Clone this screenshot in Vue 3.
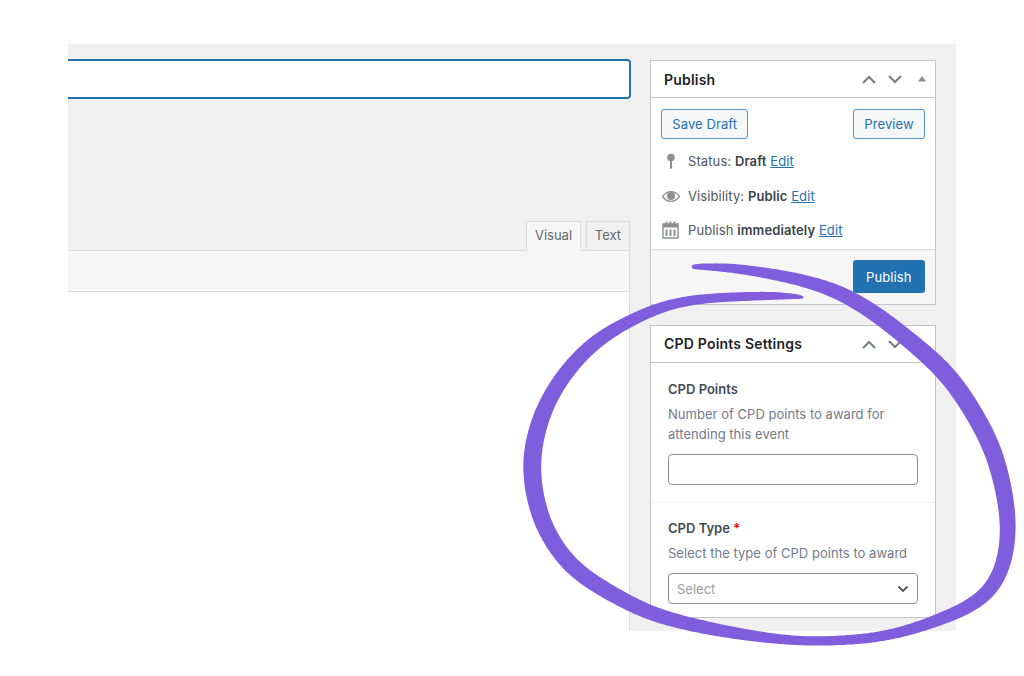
<script setup>
const pts = [
  [692,267,3],[700,266.5,7],[733,268,9],[783,276,11.5],[820,285,13],[849,297,15],[883,319,16],
  [915,345,17],[948,375,18],[978,420,18],[996.5,460,17.5],[1008.5,520,16],[1005,560,15],[997,582,15],
  [983,599,14],[956,613,13],[916,628,11],[880,637,10],[840,640.5,9.5],[800,641,9],[753,636,11],
  [707,628,13],[673,620,14],[640,609,15],[581,575,16.5],[560,553,16.5],[541,520,17],[531,470,18],
  [536,433,17.5],[548,400,16],[570,367,15],[597,340,14],[628,322,12],[655,309,11],[690,300,9.5],
  [733,297,9],[780,295.5,8],[800,296.5,5],[803.5,298,1]
];
// Dense Catmull-Rom samples along the hand-read centre line
function dense() {
  const out = [];
  for (let i = 0; i < pts.length - 1; i++) {
    const p0 = pts[Math.max(i - 1, 0)], p1 = pts[i], p2 = pts[i + 1], p3 = pts[Math.min(i + 2, pts.length - 1)];
    for (let n = 0; n < 16; n++) {
      const t = n / 16, t2 = t * t, t3 = t2 * t;
      out.push([0, 1, 2].map(k => 0.5 * (2 * p1[k] + (p2[k] - p0[k]) * t + (2 * p0[k] - 5 * p1[k] + 4 * p2[k] - p3[k]) * t2 + (3 * p1[k] - p0[k] - 3 * p2[k] + p3[k]) * t3)));
    }
  }
  out.push(pts[pts.length - 1]);
  return out;
}
// Even spacing along the arc, so the smoothing window is the same length everywhere
function resample(list, step) {
  const out = [list[0]];
  let carry = 0;
  for (let i = 1; i < list.length; i++) {
    const a = list[i - 1], b = list[i];
    const d = Math.hypot(b[0] - a[0], b[1] - a[1]);
    let pos = step - carry;
    while (pos <= d) {
      const t = d ? pos / d : 0;
      out.push([a[0] + (b[0] - a[0]) * t, a[1] + (b[1] - a[1]) * t, a[2] + (b[2] - a[2]) * t]);
      pos += step;
    }
    carry = (carry + d) % step;
  }
  out.push(list[list.length - 1]);
  return out;
}
function smooth(list, radius) {
  return list.map((_, i) => {
    const r = Math.min(radius, i, list.length - 1 - i);
    const sum = [0, 0, 0];
    for (let j = i - r; j <= i + r; j++) for (let k = 0; k < 3; k++) sum[k] += list[j][k];
    return sum.map(v => v / (2 * r + 1));
  });
}
const line = smooth(smooth(resample(dense(), 2), 10), 10);
const left = [], right = [];
line.forEach((p, i) => {
  const a = line[Math.max(i - 1, 0)], b = line[Math.min(i + 1, line.length - 1)];
  const dx = b[0] - a[0], dy = b[1] - a[1], l = Math.hypot(dx, dy) || 1;
  const nx = -dy / l * p[2] / 2, ny = dx / l * p[2] / 2;
  left.push(`${(p[0] + nx).toFixed(1)} ${(p[1] + ny).toFixed(1)}`);
  right.unshift(`${(p[0] - nx).toFixed(1)} ${(p[1] - ny).toFixed(1)}`);
});
const scribble = 'M' + left.concat(right).join('L') + 'Z';
</script>

<template>
  <div class="page">
    <div class="screen">
      <div class="main">
        <div class="title-input"></div>
        <div class="tabs">
          <span class="tab active">Visual</span>
          <span class="tab">Text</span>
        </div>
        <div class="editor">
          <div class="toolbar"></div>
          <div class="area"></div>
        </div>
      </div>

      <div class="side">
        <section class="box">
          <header class="box-head">
            <h2>Publish</h2>
            <div class="head-icons">
              <svg width="16" height="10" viewBox="0 0 16 10"><path d="M2 9 8 3l6 6" /></svg>
              <svg width="16" height="10" viewBox="0 0 16 10"><path d="M2 2l6 6 6-6" /></svg>
              <svg class="tri" width="10" height="10" viewBox="0 0 10 10"><polygon points="5,2 9,7.5 1,7.5" /></svg>
            </div>
          </header>
          <div class="publish-body">
            <div class="actions">
              <span class="btn">Save Draft</span>
              <span class="btn">Preview</span>
            </div>
            <div class="meta">
              <div class="row row-status">
                <span class="ico">
                  <svg width="18" height="18" viewBox="0 0 18 18"><circle cx="9" cy="5.5" r="3.8" fill="#8c8f94" /><rect x="8" y="7" width="2" height="10" rx="1" fill="#8c8f94" /></svg>
                </span>
                <span>Status: <b>Draft</b> <a>Edit</a></span>
              </div>
              <div class="row row-vis">
                <span class="ico">
                  <svg width="18" height="18" viewBox="0 0 18 18"><path d="M0.5 9.5C3 6 6 4.6 9 4.6s6 1.4 8.5 4.9C15 13 12 14.400 9 14.400S3 13 .5 9.500Z" fill="none" stroke="#8c8f94" stroke-width="1.3" /><circle cx="9" cy="9" r="4" fill="#8c8f94" /></svg>
                </span>
                <span>Visibility: <b>Public</b> <a>Edit</a></span>
              </div>
              <div class="row row-date">
                <span class="ico">
                  <svg width="18" height="18" viewBox="0 0 18 18"><path d="M1 3h15v14H1z" fill="none" stroke="#8c8f94" stroke-width="1.4" /><rect x="1" y="3" width="15" height="3.5" fill="#8c8f94" /><path d="M3.5 .5h2v4h-2zM7.5 .5h2v4h-2zM11.5 .5h2v4h-2zM3.5 8.5h2v6.500h-2zM7.500 8.5h2v6.500h-2zM11.500 8.5h2v6.500h-2z" fill="#8c8f94" /></svg>
                </span>
                <span>Publish <b>immediately</b> <a>Edit</a></span>
              </div>
            </div>
            <div class="publish-foot">
              <span class="btn primary">Publish</span>
            </div>
          </div>
        </section>

        <section class="box cpd">
          <header class="box-head">
            <h2>CPD Points Settings</h2>
            <div class="head-icons">
              <svg width="16" height="10" viewBox="0 0 16 10"><path d="M2 9 8 3l6 6" /></svg>
              <svg width="16" height="10" viewBox="0 0 16 10"><path d="M2 2l6 6 6-6" /></svg>
              <svg class="tri" width="10" height="10" viewBox="0 0 10 10"><polygon points="5,2 9,7.5 1,7.5" /></svg>
            </div>
          </header>
          <div class="field first">
            <div class="label">CPD Points</div>
            <p class="desc">Number of CPD points to award for attending this event</p>
            <div class="control"></div>
          </div>
          <div class="field second">
            <div class="label">CPD Type <i>*</i></div>
            <p class="desc">Select the type of CPD points to award</p>
            <div class="control select">
              <span>Select</span>
              <svg width="12" height="8" viewBox="0 0 12 8"><path d="M1.5 1.5 6 6l4.500-4.500" /></svg>
            </div>
          </div>
        </section>
      </div>
    </div>

    <svg class="scribble" width="1024" height="676" viewBox="0 0 1024 676">
      <path :d="scribble" fill="#805ddc" />
    </svg>
  </div>
</template>

<style>
html, body { margin: 0; background: #fff; }
</style>

<style scoped>
.page {
  position: relative;
  width: 1024px;
  height: 676px;
  overflow: hidden;
  background: #fff;
  padding: 44px 68px 45px;
  box-sizing: border-box;
  font-family: Inter, "Liberation Sans", sans-serif;
  font-size: 13px;
  color: #50575e;
}
.screen {
  display: flex;
  width: 888px;
  height: 587px;
  background: #f0f0f1;
}
.main {
  width: 562px;
  display: flex;
  flex-direction: column;
  padding-top: 15px;
  box-sizing: border-box;
}
.title-input {
  height: 40px;
  box-sizing: border-box;
  margin-right: -1px;
  background: #fff;
  border: 2px solid #2271b1;
  border-left: 0;
  border-radius: 0 4px 4px 0;
}
.tabs {
  display: flex;
  justify-content: flex-end;
  gap: 5px;
  margin-top: 122px;
  margin-bottom: -1px;
  position: relative;
}
.tab {
  box-sizing: border-box;
  height: 30px;
  padding: 5px 0 0;
  width: 44px;
  text-align: center;
  border: 1px solid #dcdcde;
  line-height: 16px;
  color: #646970;
  background: #f0f0f1;
}
.tab.active {
  width: 55px;
  background: #f6f6f6;
  border-bottom-color: #f6f6f6;
}
.editor {
  flex: 1;
  display: flex;
  flex-direction: column;
  border: 1px solid #dcdcde;
  border-width: 1px 1px 0 0;
}
.toolbar {
  height: 40px;
  background: #f6f6f6;
  border-bottom: 1px solid #dcdcde;
}
.area { flex: 1; background: #fff; }

.side {
  width: 286px;
  margin-left: 20px;
  padding-top: 16px;
}
.box {
  box-sizing: border-box;
  background: #fff;
  border: 1px solid #c3c4c7;
}
.box-head {
  height: 37px;
  box-sizing: border-box;
  display: flex;
  align-items: center;
  justify-content: space-between;
  padding: 0 8px 0 13px;
  border-bottom: 1px solid #c3c4c7;
}
.box-head h2 {
  margin: 0;
  font-size: 14px;
  font-weight: 600;
  letter-spacing: 0.2px;
  color: #1d2327;
}
.head-icons { display: flex; align-items: center; gap: 10px; }
.head-icons svg path { fill: none; stroke: #787c82; stroke-width: 2; }
.head-icons .tri { margin-left: 4px; }
.head-icons .tri polygon { fill: #8c8f94; }
.publish-body { display: flex; flex-direction: column; }
.actions {
  display: flex;
  justify-content: space-between;
  padding: 11px 10px 0;
}
.btn {
  box-sizing: border-box;
  height: 30px;
  line-height: 28px;
  padding: 0 10.25px;
  border: 1px solid #4f94cc;
  border-radius: 3px;
  background: #f6f7f7;
  color: #2271b1;
  letter-spacing: 0.1px;
}
.meta { padding: 5px 10px 0 11px; letter-spacing: 0.1px; }
.row {
  display: flex;
  align-items: center;
  gap: 8px;
  height: 34.5px;
}
.ico { width: 18px; height: 18px; display: flex; }
b { font-weight: 600; color: #3c434a; }
a { color: #2271b1; text-decoration: underline; }
.publish-foot {
  margin-top: 1px;
  display: flex;
  justify-content: flex-end;
  padding: 10px 10px 11px;
  background: #f6f6f6;
  border-top: 1px solid #dcdcde;
}
.btn.primary {
  height: 33px;
  line-height: 34px;
  border: 0;
  padding: 0 13.5px;
  background: #2271b1;
  color: #fff;
}
.cpd { margin-top: 20px; height: 293px; }
.field { padding: 18px 17px 0 17px; }
.field.first {
  height: 140px;
  box-sizing: border-box;
  border-bottom: 1px solid #f0f0f1;
}
.field.second { padding-top: 17px; }
.label { font-weight: 600; color: #444b55; line-height: 16px; }
.label i { color: #e00; font-style: normal; }
.desc {
  margin: 7px 0 10px;
  line-height: 20px;
  color: #737b8c;
  letter-spacing: 0.03px;
}
.control {
  height: 31px;
  box-sizing: border-box;
  border: 1px solid #8c8f94;
  border-radius: 4px;
  background: #fff;
}
.select {
  display: flex;
  align-items: center;
  justify-content: space-between;
  padding: 1px 8px 0;
  color: #9a9ea6;
}
.select path { fill: none; stroke: #50575e; stroke-width: 1.8; }
.scribble {
  position: absolute;
  left: 0;
  top: 0;
  pointer-events: none;
}
</style>
